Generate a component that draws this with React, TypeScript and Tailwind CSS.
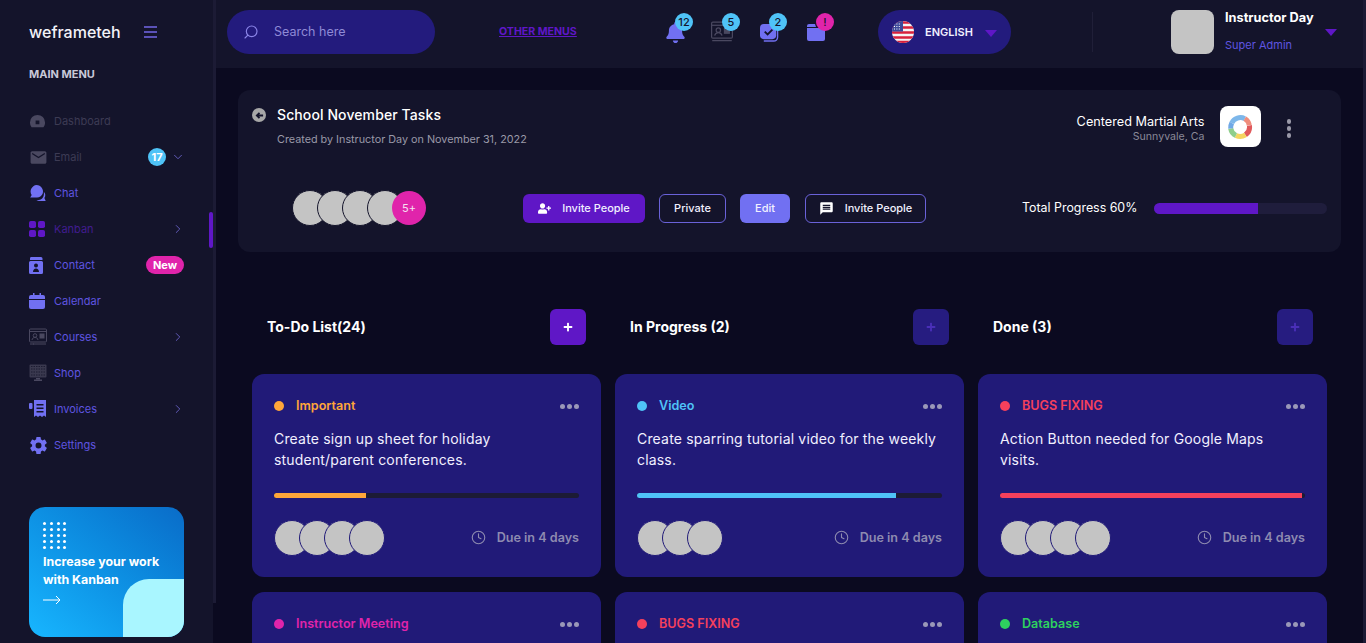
import { ReactNode } from 'react';
import { ChevronDown, ChevronRight, Clock, Search } from 'lucide-react';
import { FaBell, FaPlus, FaUserPlus } from 'react-icons/fa';
import { IoSettingsSharp } from 'react-icons/io5';
import { MdEmail, MdMessage } from 'react-icons/md';

const IconDashboard = () => (
  <svg viewBox="0 0 18 18" className="w-[17px] h-[17px]" fill="#4a4860">
    <path fillRule="evenodd" d="M9 2a8 8 0 0 1 8 8c0 2-.7 3.800-1.700 5H2.700A7.800 7.800 0 0 1 1 10a8 8 0 0 1 8-8Zm-2 6v4h4V8Z" />
  </svg>
);

const IconChat = () => (
  <svg viewBox="0 0 18 18" className="w-[18px] h-[18px]" fill="#7170f2">
    <path d="M7.500 1a6.500 6.500 0 0 1 6 9c-.9 2-3 3.400-5.500 3.400H1.200l1.500-2.300A6.500 6.500 0 0 1 7.500 1Z" />
    <path d="M14.800 7.800c1.800 1.700 2 4.300.6 6.200l1.300 3H9.800c-.9 0-1.700-.3-2.400-.7 3 .2 5.600-1 6.800-3.300.8-1.600.9-3.400.6-5.200Z" />
  </svg>
);

const IconKanban = () => (
  <svg viewBox="0 0 16 16" className="w-[16px] h-[16px]" fill="#5f17c6">
    <rect x="0" y="0" width="7" height="7" rx="1.800" />
    <rect x="9" y="0" width="7" height="7" rx="1.800" />
    <rect x="0" y="9" width="7" height="7" rx="1.800" />
    <rect x="9" y="9" width="7" height="7" rx="1.800" />
  </svg>
);

const IconContact = () => (
  <svg viewBox="0 0 14 17" className="w-[14px] h-[17px]" fill="#7170f2">
    <path fillRule="evenodd" d="M2 0h10a1.500 1.500 0 0 1 1.500 1.500V3H1V1.500A1.500 1.500 0 0 1 2 0ZM1.500 4h11A1.500 1.500 0 0 1 14 5.500v10a1.500 1.500 0 0 1-1.500 1.500h-11A1.500 1.500 0 0 1 0 15.500v-10A1.500 1.500 0 0 1 1.500 4ZM7 6.500a2 2 0 1 0 0 4 2 2 0 0 0 0-4Zm-3 8.500h6c0-2-1.300-3.500-3-3.500S4 13 4 15Z" />
  </svg>
);

const IconCalendar = () => (
  <svg viewBox="0 0 16 16" className="w-[16px] h-[16px]" fill="#7170f2">
    <path d="M4 0h1.500v2h5V0H12v2h2a2 2 0 0 1 2 2v2H0V4a2 2 0 0 1 2-2h2Z" />
    <path d="M0 7h16v7a2 2 0 0 1-2 2H2a2 2 0 0 1-2-2Z" />
  </svg>
);

const IconCourses = ({ className = 'w-[18px] h-[18px]' }: { className?: string }) => (
  <svg viewBox="0 0 18 18" className={className} fill="none" stroke="#4a4860">
    <rect x="0.500" y="1" width="17" height="13" rx="1" />
    <path d="M0.500 3.500h17" />
    <circle cx="6" cy="7.500" r="1.800" />
    <path d="M3 12c.4-2 1.500-2.500 3-2.500s2.600.5 3 2.500" />
    <rect x="11" y="6" width="4" height="4" fill="#4a4860" />
    <path d="M1 16h16M4 16h1" />
  </svg>
);

const IconShop = () => (
  <svg viewBox="0 0 18 18" className="w-[18px] h-[18px]" fill="#4a4860">
    <rect x="0.500" y="0.500" width="17" height="13" rx="1" fillOpacity="0.7" />
    <path d="M2 2.500h14M2 5h14M2 8h14M2 11h14" stroke="#14142b" strokeWidth="0.800" strokeDasharray="1.500 1" />
    <rect x="7" y="14" width="4" height="1.500" />
    <rect x="5" y="15.500" width="8" height="1.500" />
  </svg>
);

const IconInvoice = () => (
  <svg viewBox="0 0 18 18" className="w-[18px] h-[18px]" fill="#7170f2">
    <path fillRule="evenodd" d="M5 0h12v17l-2-1.500-2 1.500-2-1.500L9 17l-2-1.500L5 17ZM7.500 4v1.500h7V4Zm0 3.500V9h7V7.500Zm0 3.500v1.500h7V11Z" />
    <rect x="0" y="3" width="3.500" height="6" rx="1" />
  </svg>
);

const FlagUS = () => (
  <svg viewBox="0 0 22 22" className="w-[22px] h-[22px] shrink-0">
    <defs>
      <clipPath id="flagClip">
        <circle cx="11" cy="11" r="11" />
      </clipPath>
    </defs>
    <g clipPath="url(#flagClip)">
      <rect width="22" height="22" fill="#f4f4f6" />
      <path d="M0 1.500h22M0 6.500h22M0 11.500h22M0 16.500h22M0 21h22" stroke="#d8203c" strokeWidth="2.300" />
      <rect width="11" height="10.500" fill="#3c4a9b" />
      <path d="M2 3h7M2 5.500h7M2 8h7" stroke="#fff" strokeWidth="1" strokeDasharray="1 1.400" />
    </g>
  </svg>
);

const LogoRing = () => (
  <svg viewBox="0 0 26 26" className="w-[26px] h-[26px]" fill="none" strokeWidth="5">
    <path d="M4.800 9a9.500 9.500 0 0 1 13-4.300" stroke="#7db7ea" />
    <path d="M17.800 4.700a9.500 9.500 0 0 1 4.500 6.500" stroke="#ef8d7c" />
    <path d="M22.400 11.500a9.500 9.500 0 0 1-4 9.400" stroke="#e0595b" />
    <path d="M18.400 20.900a9.500 9.500 0 0 1-9.500.6" stroke="#f5d560" />
    <path d="M8.900 21.500a9.500 9.500 0 0 1-5.200-7" stroke="#8fce8c" />
    <path d="M3.700 14.500A9.500 9.500 0 0 1 4.800 9" stroke="#6fa8e6" />
  </svg>
);

const Caret = () => (
  <span className="w-0 h-0 border-x-[6px] border-x-transparent border-t-[7px] border-t-[#5f17c6]" />
);

function CountBadge({ children, pink }: { children: ReactNode; pink?: boolean }) {
  return (
    <span
      className={`absolute -top-[9px] left-[12px] w-[18px] h-[18px] rounded-full flex items-center justify-center text-[11px] font-medium text-[#14142b] ${
        pink ? 'bg-[#e024ab]' : 'bg-[#4fc3f7]'
      }`}
    >
      {children}
    </span>
  );
}

type NavItem = {
  label: string;
  icon: ReactNode;
  tone?: 'muted' | 'active';
  trailing?: ReactNode;
};

const arrow = <ChevronRight className="w-[14px] h-[14px] -mr-[1px] text-[#6a62c9]" strokeWidth={1.5} />;

const NAV: NavItem[] = [
  { label: 'Dashboard', icon: <IconDashboard />, tone: 'muted' },
  {
    label: 'Email',
    icon: <MdEmail className="w-[19px] h-[19px] text-[#4a4860]" />,
    tone: 'muted',
    trailing: (
      <div className="flex items-center gap-[5px] -mr-[1px]">
        <span className="w-[18px] h-[18px] rounded-full bg-[#4fc3f7] flex items-center justify-center text-[11px] font-bold text-white">
          17
        </span>
        <ChevronDown className="w-[14px] h-[14px] text-[#6a62c9]" strokeWidth={1.5} />
      </div>
    ),
  },
  { label: 'Chat', icon: <IconChat /> },
  { label: 'Kanban', icon: <IconKanban />, tone: 'active', trailing: arrow },
  {
    label: 'Contact',
    icon: <IconContact />,
    trailing: (
      <span className="h-[18px] w-[38px] rounded-full bg-[#e024ab] flex items-center justify-center text-[11px] font-bold text-white">
        New
      </span>
    ),
  },
  { label: 'Calendar', icon: <IconCalendar /> },
  { label: 'Courses', icon: <IconCourses />, trailing: arrow },
  { label: 'Shop', icon: <IconShop /> },
  { label: 'Invoices', icon: <IconInvoice />, trailing: arrow },
  { label: 'Settings', icon: <IoSettingsSharp className="w-[19px] h-[19px] text-[#7170f2]" /> },
];

function Sidebar() {
  return (
    <aside className="relative w-[216px] h-full shrink-0 flex flex-col">
      <div className="absolute top-0 right-0 w-[3px] h-[603px] bg-[#1c1b35]" />
      <div className="absolute top-0 left-0 bottom-0 w-[213px] bg-[#14142b]" />
      <div className="relative flex flex-col h-full pl-[29px]">
        <div className="flex items-center h-[62px] pt-[1px]">
          <span className="w-[115px] text-[16px] font-medium text-[#f2f2f8]">weframeteh</span>
          <span className="flex flex-col gap-[3px] w-[13px]">
            <span className="h-[2px] bg-[#5b52b8]" />
            <span className="h-[2px] bg-[#5b52b8]" />
            <span className="h-[2px] bg-[#5b52b8]" />
          </span>
        </div>
        <div className="text-[11px] font-bold leading-[24px] text-[#c9c9d9]">MAIN MENU</div>
        <nav className="mt-[17px] flex flex-col w-[155px]">
          {NAV.map((item) => (
            <div key={item.label} className="flex items-center h-[36px]">
              <span className="w-[25px] flex justify-start">{item.icon}</span>
              <span
                className={`text-[11px] ${
                  item.tone === 'muted'
                    ? 'text-[#3d3b54]'
                    : item.tone === 'active'
                      ? 'text-[#411c8f]'
                      : 'text-[#5f55e0]'
                }`}
              >
                {item.label}
              </span>
              {item.trailing && <span className="ml-auto flex items-center">{item.trailing}</span>}
            </div>
          ))}
        </nav>
        <div className="absolute left-[209px] top-[212px] w-[4px] h-[36px] rounded-sm bg-[#5f17c6]" />
        <div className="relative mt-[44px] w-[155px] h-[130px] rounded-2xl overflow-hidden bg-gradient-to-tr from-[#18b6ff] to-[#0a6cc8] pl-[14px] pt-[15px]">
          <div className="grid grid-cols-4 gap-x-[3px] gap-y-[3px] w-[24px]">
            {Array.from({ length: 20 }).map((_, i) => (
              <span key={i} className="w-[3px] h-[3px] bg-white rounded-full" />
            ))}
          </div>
          <p className="mt-[4px] text-[12.4px] leading-[18px] font-bold text-white whitespace-nowrap">
            Increase your work
            <br />
            with Kanban
          </p>
          <svg viewBox="0 0 18 10" className="w-[18px] h-[10px] mt-[6px]" fill="none" stroke="#fff">
            <path d="M0 5h17M13 1l4 4-4 4" />
          </svg>
          <div className="absolute right-0 bottom-0 w-[61px] h-[58px] rounded-tl-[26px] bg-[#a9f6ff]" />
        </div>
      </div>
    </aside>
  );
}

function Header() {
  return (
    <header className="h-[68px] shrink-0 bg-[#14142b] flex items-center pl-[11px] pb-[4px]">
      <div className="w-[208px] h-[44px] rounded-full bg-[#231b7d] flex items-center pl-[16px]">
        <Search className="w-[16px] h-[16px] text-[#8b85e8] -scale-x-100" strokeWidth={1.75} />
        <span className="ml-[15px] text-[12.5px] text-[#8f8ad6]">Search here</span>
      </div>
      <span className="ml-[64px] w-[78px] text-[10.6px] font-bold text-[#5f17c6] underline whitespace-nowrap">
        OTHER MENUS
      </span>
      <div className="ml-[86px] flex gap-[23px] pt-[4px]">
        <span className="relative w-6 h-6 flex items-center justify-center">
          <FaBell className="w-[21px] h-[21px] mb-[4px] text-[#7170f2]" />
          <CountBadge>12</CountBadge>
        </span>
        <span className="relative w-6 h-6 flex items-center justify-center">
          <IconCourses className="w-[22px] h-[22px] mb-[4px]" />
          <CountBadge>5</CountBadge>
        </span>
        <span className="relative w-6 h-6 flex items-center justify-center">
          <svg viewBox="0 0 20 20" className="w-[19px] h-[19px] mb-[4px]">
            <rect x="0" y="1" width="17" height="16" rx="4" fill="#7170f2" />
            <path d="M5 9l3 3 5-5" fill="none" stroke="#14142b" strokeWidth="2" />
            <path d="M18.500 6v9a4 4 0 0 1-4 4H4" fill="none" stroke="#7170f2" strokeWidth="1.500" />
          </svg>
          <CountBadge>2</CountBadge>
        </span>
        <span className="relative w-6 h-6 flex items-center justify-center">
          <svg viewBox="0 0 18 18" className="w-[18px] h-[18px] mb-[4px]" fill="#7170f2">
            <path d="M2 1h6l1 3H0V3a2 2 0 0 1 2-2Z" />
            <path d="M0 5h18v11a2 2 0 0 1-2 2H2a2 2 0 0 1-2-2Z" />
          </svg>
          <CountBadge pink>!</CountBadge>
        </span>
      </div>
      <div className="ml-[50px] w-[133px] h-[44px] rounded-full bg-[#231b7d] flex items-center pl-[14px]">
        <FlagUS />
        <span className="ml-[11px] text-[11px] font-semibold text-[#f1f0ff]">ENGLISH</span>
        <span className="ml-[12px] mt-[2px] flex">
          <Caret />
        </span>
      </div>
      <div className="ml-[81px] w-px h-[40px] bg-[#201f38]" />
      <div className="ml-[78px] w-[43px] h-[44px] rounded-lg bg-[#c4c4c4]" />
      <div className="ml-[11px] mb-[2px] w-[100px] flex flex-col gap-[12px]">
        <span className="text-[12.75px] leading-[16px] font-bold text-white whitespace-nowrap">Instructor Day</span>
        <span className="text-[11px] leading-[14px] text-[#5f55e0]">Super Admin</span>
      </div>
      <span className="flex">
        <Caret />
      </span>
    </header>
  );
}

function Avatars({ count, ring }: { count: number; ring: string }) {
  return (
    <div className="flex">
      {Array.from({ length: count }).map((_, i) => (
        <span
          key={i}
          className={`w-[36px] h-[36px] -mr-[11px] rounded-full bg-[#c4c4c4] border ${ring}`}
        />
      ))}
    </div>
  );
}

function ProjectPanel() {
  return (
    <section className="mx-[22px] mt-[22px] h-[162px] shrink-0 rounded-xl bg-[#14142b] pl-[14px] pr-[14px] pt-[16px]">
      <div className="flex h-[44px]">
        <span className="mt-[2px] w-[14px] h-[14px] rounded-full bg-[#a8a8a8] flex items-center justify-center text-[#14142b]">
          <svg viewBox="0 0 10 10" className="w-[9px] h-[9px]" fill="none" stroke="currentColor" strokeWidth="2">
            <path d="M9 5H2M5 2 2 5l3 3" />
          </svg>
        </span>
        <div className="ml-[11px]">
          <div className="text-[14px] leading-[18px] font-medium tracking-[0.1px] text-white">School November Tasks</div>
          <div className="mt-[9px] text-[10.8px] leading-[14px] text-[#9a99a8]">Created by Instructor Day on November 31, 2022</div>
        </div>
        <div className="ml-auto flex items-start">
          <div className="mt-[8px] text-right">
            <div className="text-[12.7px] leading-[15px] text-white">Centered Martial Arts</div>
            <div className="text-[10.6px] leading-[16px] text-[#8a8998]">Sunnyvale, Ca</div>
          </div>
          <div className="ml-[15px] w-[41px] h-[41px] rounded-lg bg-white flex items-center justify-center">
            <LogoRing />
          </div>
          <div className="ml-[26px] mr-[36px] mt-[13px] flex flex-col gap-[2.500px]">
            <span className="w-[4.500px] h-[4.500px] rounded-full bg-[#9a99a8]" />
            <span className="w-[4.500px] h-[4.500px] rounded-full bg-[#9a99a8]" />
            <span className="w-[4.500px] h-[4.500px] rounded-full bg-[#9a99a8]" />
          </div>
        </div>
      </div>
      <div className="mt-[40px] flex items-center">
        <div className="ml-[40px] flex w-[231px]">
          {[0, 1, 2, 3].map((i) => (
            <span key={i} className="w-[36px] h-[36px] -mr-[11px] rounded-full bg-[#c4c4c4] border border-[#14142b]" />
          ))}
          <span className="w-[34px] h-[34px] mt-px rounded-full bg-[#e024ab] flex items-center justify-center text-[11px] text-[#f5e0f0]">
            5+
          </span>
        </div>
        <div className="flex items-center gap-[14px] text-[11px] font-medium text-[#f1f0ff]">
          <button className="h-[29px] w-[122px] rounded-md bg-[#5f17c6] flex items-center justify-center gap-[11px]">
            <FaUserPlus className="w-[13px] h-[13px] text-white" />
            Invite People
          </button>
          <button className="h-[29px] w-[67px] rounded-md border border-[#6a62d9]">Private</button>
          <button className="h-[29px] w-[50px] rounded-md bg-[#7170f2]">Edit</button>
          <button className="ml-px h-[29px] w-[121px] rounded-md border border-[#6a62d9] flex items-center justify-center gap-[11px]">
            <MdMessage className="w-[15px] h-[15px] text-white" />
            Invite People
          </button>
        </div>
        <span className="ml-[96px] text-[12.4px] text-white whitespace-nowrap">Total Progress 60%</span>
        <div className="ml-auto w-[173px] h-[11px] rounded-full overflow-hidden bg-[#1f1d3c]">
          <div className="h-full w-[60%] bg-[#5f17c6]" />
        </div>
      </div>
    </section>
  );
}

type Task = {
  tag: string;
  tagColor: string;
  dotColor: string;
  text?: string[];
  progress?: number;
  people?: number;
};

const COLUMNS: { title: string; active: boolean; tasks: Task[] }[] = [
  {
    title: 'To-Do List(24)',
    active: true,
    tasks: [
      {
        tag: 'Important',
        tagColor: 'text-[#ffa63a]',
        dotColor: 'bg-[#ffa63a]',
        text: ['Create sign up sheet for holiday', 'student/parent conferences.'],
        progress: 30,
        people: 4,
      },
      { tag: 'Instructor Meeting', tagColor: 'text-[#e024ab]', dotColor: 'bg-[#e024ab]' },
    ],
  },
  {
    title: 'In Progress (2)',
    active: false,
    tasks: [
      {
        tag: 'Video',
        tagColor: 'text-[#4fc3f7]',
        dotColor: 'bg-[#4fc3f7]',
        text: ['Create sparring tutorial video for the weekly', 'class.'],
        progress: 85,
        people: 3,
      },
      { tag: 'BUGS FIXING', tagColor: 'text-[#f5405c]', dotColor: 'bg-[#f5405c]' },
    ],
  },
  {
    title: 'Done (3)',
    active: false,
    tasks: [
      {
        tag: 'BUGS FIXING',
        tagColor: 'text-[#f5405c]',
        dotColor: 'bg-[#f5405c]',
        text: ['Action Button needed for Google Maps', 'visits.'],
        progress: 99,
        people: 4,
      },
      { tag: 'Database', tagColor: 'text-[#2ed15f]', dotColor: 'bg-[#2ed15f]' },
    ],
  },
];

function TaskCard({ task }: { task: Task }) {
  return (
    <div className="h-[203px] shrink-0 rounded-xl bg-[#211a78] px-[22px] pt-[22px]">
      <div className="flex items-center h-[20px]">
        <span className={`w-[10px] h-[10px] rounded-full ${task.dotColor}`} />
        <span className={`ml-[12px] text-[12.6px] font-semibold ${task.tagColor}`}>{task.tag}</span>
        <span className="ml-auto flex gap-[2px]">
          <span className="w-[5px] h-[5px] rounded-full bg-[#9a98b8]" />
          <span className="w-[5px] h-[5px] rounded-full bg-[#9a98b8]" />
          <span className="w-[5px] h-[5px] rounded-full bg-[#9a98b8]" />
        </span>
      </div>
      {task.text && (
        <>
          <p className="mt-[12px] h-[42px] text-[14px] leading-[21px] tracking-[0.18px] text-[#f1f0ff] whitespace-nowrap">
            {task.text[0]}
            <br />
            {task.text[1]}
          </p>
          <div className="mt-[23px] h-[5px] rounded-full overflow-hidden bg-[#1c1b35]">
            <div className={`h-full ${task.dotColor}`} style={{ width: `${task.progress}%` }} />
          </div>
          <div className="mt-[22px] flex items-center justify-between">
            <Avatars count={task.people ?? 0} ring="border-[#211a78]" />
            <div className="flex items-center gap-[11px] text-[12.6px] font-semibold text-[#8e8bb0]">
              <Clock className="w-[15px] h-[15px]" strokeWidth={1.75} />
              Due in 4 days
            </div>
          </div>
        </>
      )}
    </div>
  );
}

function Board() {
  return (
    <div className="mx-[36px] mt-[57px] grid grid-cols-3 gap-x-[14px]">
      {COLUMNS.map((col) => (
        <div key={col.title} className="flex flex-col group">
          <div className="flex items-center justify-between pl-[15px] pr-[15px] group-last:pr-[14px]">
            <span className="pb-[2px] text-[14px] font-bold text-white">{col.title}</span>
            <span
              className={`w-[36px] h-[36px] rounded-md flex items-center justify-center ${
                col.active ? 'bg-[#5f17c6] text-white' : 'bg-[#261c80] text-[#4a2fb8]'
              }`}
            >
              <FaPlus className="w-[10px] h-[10px]" />
            </span>
          </div>
          <div className="mt-[29px] flex flex-col gap-[15px]">
            {col.tasks.map((task) => (
              <TaskCard key={task.tag} task={task} />
            ))}
          </div>
        </div>
      ))}
    </div>
  );
}

export default function App() {
  return (
    <div className="flex h-[643px] overflow-hidden bg-[#0b0a20] font-['Inter',sans-serif]">
      <Sidebar />
      <main className="flex-1 flex flex-col min-w-0 overflow-hidden">
        <Header />
        <ProjectPanel />
        <Board />
      </main>
      <div className="w-[3px] shrink-0 bg-[#1c1b35]" />
    </div>
  );
}
